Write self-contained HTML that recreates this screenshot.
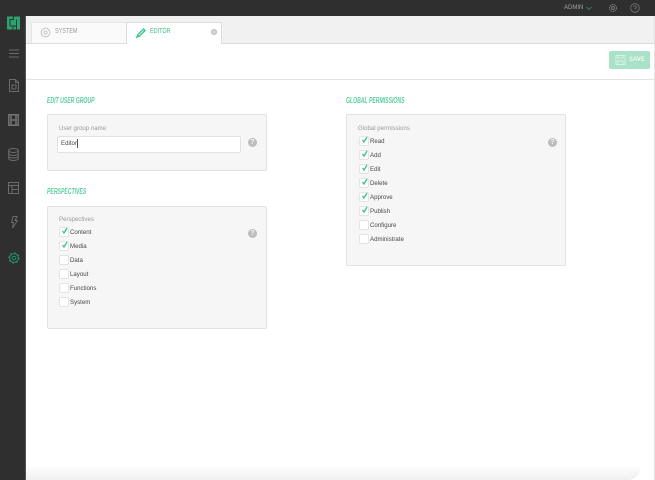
<!DOCTYPE html>
<html><head><meta charset="utf-8"><style>
html,body{margin:0;padding:0;width:655px;height:480px;overflow:hidden;background:#2f2f2f;font-family:"Liberation Sans",sans-serif}
.a{position:absolute}
#wrap{position:absolute;left:0;top:0;width:655px;height:480px;filter:blur(.3px)}
.t{position:absolute;white-space:nowrap;font-size:6.1px;line-height:10px;color:#484848}
.r{margin-top:1px}
.s{position:absolute;white-space:nowrap;font-size:7px;line-height:10px;transform:scaleX(.78);transform-origin:0 50%}
.h{position:absolute;white-space:nowrap;font-size:8px;line-height:10px;font-weight:bold;font-style:italic;color:#5ccf9f;transform:scaleX(.64);transform-origin:0 50%}
.p{position:absolute;background:#f6f6f6;border:1px solid #e2e2e2;border-radius:2px;box-sizing:border-box}
.c{position:absolute;width:10px;height:10px;background:#fff;border:1px solid #e4e4e4;border-radius:2px;box-sizing:border-box}
.c svg{position:absolute;left:1px;top:-1px}
.q{position:absolute;width:9px;height:9px;border-radius:50%;background:#bdbdbd;color:#f4f4f4;font-size:7px;line-height:9px;text-align:center;font-weight:bold}
svg.i{position:absolute;fill:none}
</style></head><body><div id="wrap">
<div class="a" style="left:25px;top:16px;width:1px;height:464px;background:#555"></div>
<div class="a" style="left:26px;top:16px;width:629px;height:464px;background:#fff"></div>
<div class="a" style="left:26px;top:16px;width:629px;height:27px;background:#f1f1f1;border-bottom:1px solid #dcdcdc"></div>
<div class="a" style="left:26px;top:79px;width:629px;height:1px;background:#e2e2e2"></div>
<div class="a" style="left:654px;top:16px;width:1px;height:464px;background:#e4e4e4"></div>
<div class="a" style="left:26px;top:464px;width:614px;height:16px;background:linear-gradient(#fff0,#efefef);border-radius:0 0 12px 0"></div>

<!-- tabs -->
<div class="a" style="left:31px;top:22px;width:95px;height:21px;background:#fafafa;border-top:1px solid #e4e4e4;border-left:1px solid #e4e4e4;box-sizing:border-box"></div>
<div class="a" style="left:126px;top:22px;width:96px;height:22px;background:#fff;border:1px solid #dedede;border-bottom:0;border-radius:2px 2px 0 0;box-sizing:border-box"></div>
<svg class="i" style="left:40px;top:27px" width="11" height="11" viewBox="0 0 11 11" stroke="#c4c4c4" stroke-width="1"><circle cx="5.500" cy="5.500" r="4.400"/><circle cx="5.500" cy="5.500" r="1.600"/></svg>
<div class="s" style="left:55px;top:27px;color:#9a9a9a">SYSTEM</div>
<svg class="i" style="left:135px;top:27px" width="12" height="12" viewBox="0 0 12 12" stroke="#45c690" stroke-width="1.500"><path d="M2 10L3 7.500L8.500 2L10 3.500L4.500 9Z"/></svg>
<div class="s" style="left:150px;top:27px;color:#3fc48c">EDITOR</div>
<div class="a" style="left:211px;top:29px;width:6px;height:6px;border-radius:50%;background:#d4d4d4;border:.5px solid #bbb;box-sizing:border-box"></div>

<!-- top right -->
<div class="t" style="left:564px;top:3px;color:#a4a4a4;font-size:6px">ADMIN</div>
<svg class="i" style="left:586px;top:6px" width="6" height="5" viewBox="0 0 6 5" stroke="#2f7d5b" stroke-width="1"><path d="M.5 1L3 3.500L5.500 1"/></svg>
<svg class="i" style="left:608px;top:3px" width="10" height="10" viewBox="0 0 10 10" stroke="#777" stroke-width="1"><circle cx="5" cy="5" r="3.500" stroke-dasharray="1.500 .6"/><circle cx="5" cy="5" r="1.500"/></svg>
<svg class="i" style="left:630px;top:3px" width="10" height="10" viewBox="0 0 10 10" stroke="#777" stroke-width=".8"><circle cx="5" cy="5" r="4.300"/><path d="M3.700 4C3.700 2.500 6.400 2.500 6.400 4C6.400 5 5 5 5 6.500"/></svg>

<!-- save -->
<div class="a" style="left:609px;top:51px;width:41px;height:18px;background:#a9e2c7;border-radius:2px"></div>
<svg class="i" style="left:615px;top:55px" width="11" height="10" viewBox="0 0 11 10" stroke="#d6f2e5" stroke-width="1"><path d="M1 .5H10V9.500H1ZM3 .5V3H8V.5M3 9.500V6H8V9.500"/></svg>
<div class="t" style="left:629px;top:55px;color:#eef9f4;font-size:6px;font-weight:bold">SAVE</div>

<!-- sidebar -->
<svg class="i" style="left:7px;top:16px" width="13" height="14" viewBox="0 0 13 14"><rect x="0" y=".5" width="13" height="13" fill="#2aa36f"/><path stroke="#2f2f2f" stroke-width=".9" d="M6.500 .5V3.500H3V10H9.500M9.500 3.500V13.500M3 10V10M6 10V13.500"/></svg>
<svg class="i" style="left:9px;top:49px" width="10" height="9" viewBox="0 0 10 9" stroke="#6b6b6b" stroke-width="1"><path d="M0 1H10M0 4.500H10M0 8H10"/></svg>
<svg class="i" style="left:9px;top:79px" width="10" height="13" viewBox="0 0 10 13" stroke="#6b6b6b" stroke-width="1"><path d="M.5.500H6.500L9.500 3.500V12.500H.5ZM6.500.500V3.500H9.500M3 6H7V10H3Z"/></svg>
<svg class="i" style="left:8px;top:114px" width="11" height="12" viewBox="0 0 11 12" stroke="#737373" stroke-width="1.500"><path d="M.8.800H10.200V11.200H.8ZM3 .8V11.200M8 .8V11.200M3 6H8"/></svg>
<svg class="i" style="left:8px;top:148px" width="11" height="13" viewBox="0 0 11 13" stroke="#6b6b6b" stroke-width="1"><ellipse cx="5.500" cy="2.500" rx="4.800" ry="2"/><path d="M.7 2.500V10.500C.7 11.600 2.800 12.500 5.500 12.500S10.300 11.600 10.300 10.500V2.500M.7 5.500C.7 6.600 2.800 7.500 5.500 7.500S10.300 6.600 10.300 5.500M.7 8C.7 9.100 2.800 10 5.500 10S10.300 9.100 10.300 8"/></svg>
<svg class="i" style="left:8px;top:182px" width="11" height="12" viewBox="0 0 11 12" stroke="#6b6b6b" stroke-width="1"><path d="M.5.500H10.500V11.500H.5ZM.5 3.500H10.500M4 3.500V11.500M4 7.500H10.500"/></svg>
<svg class="i" style="left:10px;top:216px" width="8" height="13" viewBox="0 0 8 13" stroke="#6b6b6b" stroke-width="1"><path d="M3 .5H7L5 4.500H7.500L2.500 12L3.500 6.500H1.500Z"/></svg>
<svg class="i" style="left:8px;top:252px" width="12" height="12" viewBox="0 0 12 12" stroke="#23946a"><circle cx="6" cy="6" r="4.400" stroke-width="1"/><circle cx="6" cy="6" r="5" stroke-width="1.200" stroke-dasharray="1.500 2.430"/><circle cx="6" cy="6" r="1.800" stroke-width="1"/></svg>

<!-- left -->
<div class="h" style="left:47px;top:96px">EDIT USER GROUP</div>
<div class="p" style="left:47px;top:114px;width:220px;height:57px"></div>
<div class="t" style="left:59px;top:124px;color:#9a9a9a">User group name</div>
<div class="a" style="left:57px;top:136px;width:184px;height:17px;background:#fff;border:1px solid #e2e2e2;border-radius:2px;box-sizing:border-box"></div>
<div class="t" style="left:61px;top:139px">Editor</div>
<div class="a" style="left:77px;top:139px;width:1px;height:9px;background:#555"></div>
<div class="q" style="left:248px;top:138px">?</div>

<div class="h" style="left:47px;top:187px">PERSPECTIVES</div>
<div class="p" style="left:47px;top:206px;width:220px;height:123px"></div>
<div class="t" style="left:59px;top:215px;color:#9a9a9a">Perspectives</div>
<div class="q" style="left:248px;top:229px">?</div>
<div class="c" style="left:59px;top:227px"><svg width="8" height="8" viewBox="0 0 8 8" fill="none" stroke="#35c486" stroke-width="1.300"><path d="M1.500 4L3 6L6 1"/></svg></div><div class="t r" style="left:70px;top:227px">Content</div>
<div class="c" style="left:59px;top:241px"><svg width="8" height="8" viewBox="0 0 8 8" fill="none" stroke="#35c486" stroke-width="1.300"><path d="M1.500 4L3 6L6 1"/></svg></div><div class="t r" style="left:70px;top:241px">Media</div>
<div class="c" style="left:59px;top:255px"></div><div class="t r" style="left:70px;top:255px">Data</div>
<div class="c" style="left:59px;top:269px"></div><div class="t r" style="left:70px;top:269px">Layout</div>
<div class="c" style="left:59px;top:283px"></div><div class="t r" style="left:70px;top:283px">Functions</div>
<div class="c" style="left:59px;top:297px"></div><div class="t r" style="left:70px;top:297px">System</div>

<!-- right -->
<div class="h" style="left:346px;top:96px">GLOBAL PERMISSIONS</div>
<div class="p" style="left:346px;top:114px;width:220px;height:152px"></div>
<div class="t" style="left:358px;top:124px;color:#9a9a9a">Global permissions</div>
<div class="q" style="left:548px;top:138px">?</div>
<div class="c" style="left:359px;top:136px"><svg width="8" height="8" viewBox="0 0 8 8" fill="none" stroke="#35c486" stroke-width="1.300"><path d="M1.500 4L3 6L6 1"/></svg></div><div class="t r" style="left:370px;top:136px">Read</div>
<div class="c" style="left:359px;top:150px"><svg width="8" height="8" viewBox="0 0 8 8" fill="none" stroke="#35c486" stroke-width="1.300"><path d="M1.500 4L3 6L6 1"/></svg></div><div class="t r" style="left:370px;top:150px">Add</div>
<div class="c" style="left:359px;top:164px"><svg width="8" height="8" viewBox="0 0 8 8" fill="none" stroke="#35c486" stroke-width="1.300"><path d="M1.500 4L3 6L6 1"/></svg></div><div class="t r" style="left:370px;top:164px">Edit</div>
<div class="c" style="left:359px;top:178px"><svg width="8" height="8" viewBox="0 0 8 8" fill="none" stroke="#35c486" stroke-width="1.300"><path d="M1.500 4L3 6L6 1"/></svg></div><div class="t r" style="left:370px;top:178px">Delete</div>
<div class="c" style="left:359px;top:192px"><svg width="8" height="8" viewBox="0 0 8 8" fill="none" stroke="#35c486" stroke-width="1.300"><path d="M1.500 4L3 6L6 1"/></svg></div><div class="t r" style="left:370px;top:192px">Approve</div>
<div class="c" style="left:359px;top:206px"><svg width="8" height="8" viewBox="0 0 8 8" fill="none" stroke="#35c486" stroke-width="1.300"><path d="M1.500 4L3 6L6 1"/></svg></div><div class="t r" style="left:370px;top:206px">Publish</div>
<div class="c" style="left:359px;top:220px"></div><div class="t r" style="left:370px;top:220px">Configure</div>
<div class="c" style="left:359px;top:234px"></div><div class="t r" style="left:370px;top:234px">Administrate</div>
</div></body></html>
